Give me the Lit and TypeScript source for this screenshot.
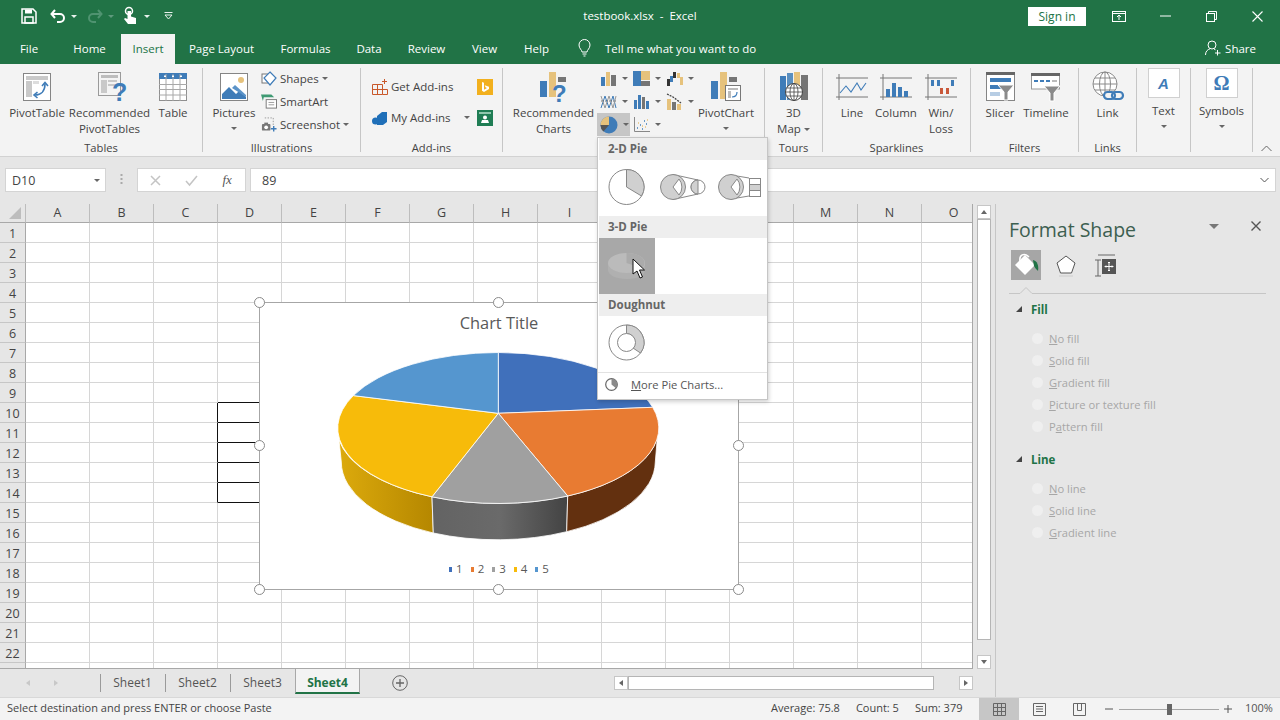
import { LitElement, html, svg, css, nothing } from "lit";
import { customElement } from "lit/decorators.js";

const BLUE = "#3f7cb8";
const TAN = "#e6c27c";
const GRAY = "#757575";

const ico = (w: number, h: number, body: unknown) =>
  html`<svg width=${w} height=${h} viewBox="0 0 ${w} ${h}" fill="none">${body}</svg>`;

/* ribbon icons */
const I = {
  pivot: ico(30, 30, svg`<rect x="1.5" y="1.5" width="27" height="27" fill="#fff" stroke="#858585"/><rect x="4" y="4" width="22" height="4" fill="#c9c9c9"/><rect x="4" y="9" width="6" height="16" fill="#c9c9c9"/><rect x="11" y="9" width="6" height="3" fill="#ddd"/><path d="M13 23c6 0 10-4 10-11" stroke="${BLUE}" stroke-width="1.6"/><path d="M20 14l3-3.5 3 3.5M15.5 20l-3.5 3 3.5 3" stroke="${BLUE}" stroke-width="1.6"/>`),
  recPivot: ico(32, 32, svg`<rect x="4.5" y="1.5" width="22" height="23" fill="#f4f4f4" stroke="#9a9a9a"/><rect x="7" y="4" width="17" height="3" fill="#bdbdbd"/><rect x="7" y="9" width="6" height="13" fill="#c9c9c9"/><rect x="14" y="9" width="9" height="2" fill="#c9c9c9"/><rect x="14" y="13" width="9" height="2" fill="#c9c9c9"/><text x="18" y="30" font-family="Liberation Sans" font-size="25" font-weight="700" fill="${BLUE}">?</text>`),
  table: ico(28, 28, svg`<rect x=".5" y=".5" width="27" height="27" fill="#fff" stroke="#8f8f8f"/><rect width="28" height="6" fill="${BLUE}"/><path d="M7 1v27M14 1v27M21 1v27M0 11.5h28M0 16.5h28M0 22h28" stroke="#a8a8a8"/><path d="M5 2.5h2V4H5zM13 2.5h2V4h-2zM21 2.5h2V4h-2z" fill="#fff"/>`),
  pictures: ico(28, 28, svg`<rect x=".5" y=".5" width="27" height="27" fill="#fff" stroke="#858585"/><circle cx="21" cy="7" r="3" fill="${TAN}"/><path d="M2 26v-5l7-7 7 7 3-3 7 6v2z" fill="${BLUE}"/><path d="M12 15l3-3 11 10v2z" fill="#5b93c8"/>`),
  shapes: ico(16, 16, svg`<rect x="1" y="3" width="9" height="9" stroke="#777" fill="#fff"/><path d="M9 1l6 6-6 7-6-7z" fill="#fff" stroke="${BLUE}" stroke-width="1.2"/>`),
  smartart: ico(17, 17, svg`<path d="M0 1h11l3 3H3l-1 4z" fill="#3f9a73"/><rect x="5.5" y="6.5" width="11" height="9" fill="#fff" stroke="#777"/><path d="M8 9.5h6M8 12h6" stroke="#999"/>`),
  screenshot: ico(17, 17, svg`<path d="M4 1.5h9v8" stroke="#999" stroke-dasharray="1.5 1.5"/><rect x="1" y="8" width="9" height="7" rx="1" fill="#777"/><rect x="3.5" y="6.5" width="4" height="2" fill="#777"/><circle cx="5.5" cy="11.5" r="2" fill="#fff"/><path d="M13.5 10v6M10.5 13h6" stroke="${BLUE}" stroke-width="1.5"/>`),
  getAddins: ico(16, 16, svg`<path d="M.5 5.5h10v10H.5zM.5 10.5h10M5.5 5.5v10M10.5 10.5h5v5h-5" stroke="#c9582a"/><path d="M12.5 0v5M10 2.5h5" stroke="#c9582a"/>`),
  myAddins: ico(16, 16, svg`<path d="M5 6l5-4h5v10l-4 3H5z" fill="#1f6fb8"/><circle cx="3.5" cy="11" r="3.5" fill="#1f6fb8"/>`),
  bing: ico(16, 16, svg`<rect width="16" height="16" fill="#f2b01e"/><path d="M5 3l2 .7v7l3-1.7-1.5-.7-.8-2 4.3 1.5v2.2L7 13l-2-1.2z" fill="#fff"/>`),
  greenBox: ico(16, 16, svg`<rect width="16" height="16" fill="#1f7d54"/><rect x="2" y="2" width="12" height="2" fill="#8fc7ad"/><circle cx="8" cy="7.5" r="2" fill="#fff"/><path d="M4 13l1-3h6l1 3z" fill="#fff"/>`),
  recCharts: ico(30, 32, svg`<rect x="1" y="10" width="7" height="16" fill="${BLUE}"/><rect x="10" y="1" width="7" height="25" fill="${TAN}"/><rect x="19" y="6" width="8" height="5" fill="${GRAY}"/><text x="13" y="31" font-family="Liberation Sans" font-size="24" font-weight="700" fill="${BLUE}">?</text>`),
  bars: ico(17, 15, svg`<rect x="1" y="6" width="4" height="9" fill="${BLUE}"/><rect x="6" y="1" width="4" height="14" fill="${TAN}"/><rect x="11" y="4" width="5" height="11" fill="${GRAY}"/>`),
  tree: ico(17, 15, svg`<rect width="8" height="15" fill="${BLUE}"/><rect x="8" width="9" height="9" fill="${TAN}"/><rect x="8" y="10" width="9" height="5" fill="${GRAY}"/>`),
  water: ico(17, 15, svg`<rect x="1" y="8" width="3" height="7" fill="#333"/><rect x="4" y="5" width="3" height="6" fill="${BLUE}"/><rect x="7" y="1" width="3" height="6" fill="#333"/><rect x="11" y="2" width="3" height="5" fill="${TAN}"/><rect x="14" y="6" width="3" height="8" fill="${TAN}"/>`),
  stat: ico(17, 17, svg`<path d="M1 15L5 3l4 12 4-12 3 12" stroke="${BLUE}"/><path d="M1 3l4 12 4-12 4 12 3-12" stroke="#999"/><path d="M1 8h15" stroke="#777" stroke-dasharray="1 1"/>`),
  col: ico(17, 15, svg`<rect x="1" y="6" width="3" height="9" fill="${BLUE}"/><rect x="5" y="1" width="3" height="14" fill="${BLUE}"/><rect x="9" y="3" width="3" height="12" fill="${GRAY}"/><rect x="13" y="7" width="3" height="8" fill="${BLUE}"/>`),
  pareto: ico(17, 17, svg`<rect x="1" y="6" width="4" height="11" fill="${TAN}"/><rect x="6" y="9" width="4" height="8" fill="${GRAY}"/><rect x="11" y="11" width="4" height="6" fill="${TAN}"/><path d="M1 1l6 3 8 6" stroke="#444" stroke-width="1.3" stroke-dasharray="2 1"/>`),
  pie: ico(18, 18, svg`<circle cx="9" cy="9" r="8.5" fill="${BLUE}"/><path d="M9 9V.5A8.5 8.5 0 0 0 .5 9z" fill="${TAN}"/><path d="M9 9H.5a8.5 8.5 0 0 0 3 6.5z" fill="#555"/>`),
  scatter: ico(17, 17, svg`<path d="M1.5 1v14.5H17" stroke="#888"/><path d="M4 12h1M7 9h1M9 13h1M11 5h1M13 8h1" stroke="${BLUE}" stroke-width="1.5"/><path d="M5 7h1M9 10h1M12 11h1M14 4h1" stroke="${TAN}" stroke-width="1.5"/>`),
  pivotChart: ico(32, 32, svg`<rect x="1" y="10" width="7" height="18" fill="${BLUE}"/><rect x="10" y="1" width="7" height="27" fill="${TAN}"/><rect x="19" y="6" width="8" height="5" fill="${GRAY}"/><rect x="15.5" y="14.5" width="15" height="15" fill="#fff" stroke="#777"/><rect x="18" y="17" width="10" height="2" fill="#bbb"/><rect x="18" y="20" width="3" height="7" fill="#bbb"/><path d="M22 26c3 0 5-2 5-5" stroke="${BLUE}" stroke-width="1.2"/>`),
  map3d: ico(30, 30, svg`<rect x="1" y="4" width="6" height="24" fill="${BLUE}"/><rect x="8" y="1" width="6" height="27" fill="#5a8fc0"/><rect x="15" y="0" width="6" height="14" fill="${TAN}"/><rect x="22" y="3" width="7" height="25" fill="${GRAY}"/><circle cx="15" cy="20" r="8.5" fill="#fff" stroke="#444"/><path d="M6.5 20h17M7.5 16h15M7.5 24h15M15 11.5v17" stroke="#444" stroke-width=".8"/><ellipse cx="15" cy="20" rx="4" ry="8.5" stroke="#444" stroke-width=".8"/>`),
  line: ico(32, 26, svg`<path d="M3 0v26M0 4h32M0 23h32" stroke="#777"/><path d="M4 19l6-7 5 6 6-9 4 7 5-7" stroke="${BLUE}" stroke-width="1.1"/>`),
  column: ico(32, 26, svg`<path d="M3 0v26M0 4h32M0 23h32" stroke="#777"/><rect x="6" y="15" width="4" height="8" fill="${BLUE}"/><rect x="12" y="9" width="4" height="14" fill="${BLUE}"/><rect x="18" y="13" width="4" height="10" fill="${BLUE}"/><rect x="24" y="17" width="4" height="6" fill="${BLUE}"/>`),
  win: ico(32, 26, svg`<path d="M3 0v26M0 4h32M0 23h32" stroke="#777"/><rect x="6" y="6" width="3" height="6" fill="${BLUE}"/><rect x="12" y="6" width="3" height="6" fill="${BLUE}"/><rect x="15" y="14" width="3" height="6" fill="#c9583a"/><rect x="21" y="14" width="3" height="6" fill="#c9583a"/><rect x="26" y="6" width="3" height="6" fill="${BLUE}"/>`),
  slicer: ico(29, 29, svg`<rect x=".5" y=".5" width="28" height="28" fill="#fff" stroke="#858585"/><rect width="29" height="3" fill="#666"/><rect x="4" y="6" width="21" height="4" fill="${BLUE}"/><rect x="4" y="13" width="12" height="4" fill="${BLUE}"/><rect x="4" y="20" width="10" height="4" fill="#b7cde4"/><path d="M12 13h16l-6 7v8h-4v-8z" fill="#8a8a8a" stroke="#fff"/>`),
  timeline: ico(30, 28, svg`<rect x=".5" y="1" width="28" height="15" fill="#fff" stroke="#999"/><rect width="29" height="3" fill="#666"/><path d="M3 8h4M9 8h4M15 8h4" stroke="${BLUE}" stroke-width="2"/><path d="M21 8h5" stroke="#bbb" stroke-width="2"/><path d="M13 13h16l-6 7v8h-4v-8z" fill="#8a8a8a" stroke="#fff"/>`),
  link: ico(32, 32, svg`<circle cx="13" cy="13" r="12" fill="#fff" stroke="#8a8a8a"/><ellipse cx="13" cy="13" rx="5.5" ry="12" stroke="#8a8a8a"/><path d="M13 1v24M1 13h24M3 7h20M3 19h20" stroke="#8a8a8a"/><rect x="12" y="21" width="11" height="7" rx="3.5" stroke="${BLUE}" stroke-width="2.2" fill="#f3f3f3"/><rect x="20" y="21" width="11" height="7" rx="3.5" stroke="${BLUE}" stroke-width="2.2" fill="none"/>`),
};

/* dropdown thumbnails */
const T = {
  pie: ico(56, 56, svg`<circle cx="27.5" cy="27" r="17.5" fill="#fff" stroke="#888"/><path d="M27.5 27V9.5a17.5 17.5 0 0 1 15 26.5z" fill="#d0d0d0" stroke="#888"/>`),
  pieOfPie: ico(56, 56, svg`<path d="M18 14.5L43 20M18 39.5L43 34" stroke="#888"/><circle cx="18" cy="27" r="12.5" fill="#d0d0d0" stroke="#888"/><path d="M18 27l6-8a12.5 12.5 0 0 1 0 16z" fill="#fff" stroke="#888"/><circle cx="43" cy="27" r="7" fill="#fff" stroke="#888"/><path d="M43 20a7 7 0 0 0 0 14z" fill="#d0d0d0" stroke="#888"/>`),
  barOfPie: ico(56, 56, svg`<path d="M20 15l18 3M20 39l18-3" stroke="#888"/><circle cx="20" cy="27" r="12.5" fill="#d0d0d0" stroke="#888"/><path d="M20 27l6-8a12.5 12.5 0 0 1 0 16z" fill="#fff" stroke="#888"/><rect x="38.5" y="18.5" width="11" height="18" fill="#fff" stroke="#888"/><rect x="38.5" y="24.5" width="11" height="6" fill="#d0d0d0" stroke="#888"/>`),
  pie3d: ico(56, 56, svg`<path d="M9 25v7c0 5 8 9 19 9s18-4 18-9v-7z" fill="#b0b0b0"/><ellipse cx="27.5" cy="25" rx="18.5" ry="10" fill="#bbb"/><path d="M27.5 25V15c10 0 18 4 18 10 0 2-1 3.5-3 5z" fill="#ababab"/>`),
  doughnut: ico(56, 56, svg`<circle cx="27.5" cy="26.5" r="17.5" fill="#fff" stroke="#888"/><path d="M27.5 9a17.5 17.5 0 0 1 14 28l-7.5-5a9 9 0 0 0-6.5-14.5z" fill="#d0d0d0" stroke="#888"/><circle cx="27.5" cy="26.5" r="9" fill="#fff" stroke="#888"/>`),
};

const COLS = "ABCDEFGHIJKLMNO".split("");
const COVERED = "JKL"; // under the open menu
const ROWS = Array.from({ length: 23 }, (_, i) => i + 1);
const HANDLES = ["tl", "tc", "tr", "ml", "mr", "bl", "bc", "br"];
const FILL_OPTS: [string, string, string][] = [
  ["", "N", "o fill"], ["", "S", "olid fill"], ["", "G", "radient fill"],
  ["", "P", "icture or texture fill"], ["P", "a", "ttern fill"],
];
const LINE_OPTS: [string, string, string][] = [
  ["", "N", "o line"], ["", "S", "olid line"], ["", "G", "radient line"],
];

@customElement("app-root")
export class AppRoot extends LitElement {
  static styles = css`
    :host { display: block; position: relative; width: 1280px; height: 720px; overflow: hidden;
      font-family: "Open Sans", "Noto Sans", sans-serif; font-size: 11.5px; color: #444; background: #e6e6e6; }
    svg { display: block; flex: none; overflow: visible; }
    .caret { display: inline-block; width: 0; height: 0; border: 3px solid transparent; border-top: 3px solid #666; border-bottom: 0; flex: none; }
    .caret.w { border-top-color: #e8f1ec; }
    .caret.dim { border-top-color: #5f9a7d; }

    .titlebar { height: 32px; background: #217346; color: #fff; display: grid; grid-template-columns: 1fr auto 1fr; align-items: center; }
    .qat { display: flex; align-items: center; padding-left: 21px; }
    .doc { font-size: 11.5px; margin-top: -1px; }
    .winbtns { display: flex; align-items: center; justify-content: flex-end; }
    .signin { width: 58px; height: 19px; background: #fff; color: #217346; text-align: center; line-height: 19px; font-size: 12px; margin-right: 10px; }
    .wb { width: 46px; display: flex; justify-content: center; }

    .tabs { height: 32px; background: #217346; color: #fff; display: flex; align-items: flex-end; }
    .tab { height: 32px; line-height: 33px; text-align: center; font-size: 11.5px; }
    .tab.on { height: 30px; line-height: 29px; background: #f3f3f3; color: #217346; }
    .tell { display: flex; align-items: center; height: 32px; margin-left: 16px; gap: 14px; font-size: 11.5px; }
    .share { margin-left: auto; margin-right: 24px; display: flex; align-items: center; gap: 4px; height: 32px; font-size: 11.5px; }

    .ribbon { height: 92px; background: #f3f3f3; border-bottom: 1px solid #d2d2d2; display: flex; position: relative; color: #444; }
    .group { margin-top: 4px; height: 84px; border-right: 1px solid #c6c6c6; box-sizing: border-box; display: flex; flex-direction: column; flex: none; }
    .content { height: 72px; display: flex; flex: none; box-sizing: border-box; }
    .glabel { height: 12px; line-height: 16px; text-align: center; font-size: 11.2px; color: #444; }
    .big { display: flex; flex-direction: column; align-items: center; flex: none; }
    .bigicon { height: 37px; display: flex; align-items: center; justify-content: center; }
    .lbl { line-height: 16px; text-align: center; white-space: nowrap; }
    .lbl .caret { margin-left: 3px; vertical-align: 2px; }
    .arrowline { height: 15px; display: flex; align-items: center; justify-content: center; }
    .pl10 { padding-left: 10px; } .pl5 { padding-left: 5px; } .pl6 { padding-left: 6px; }
    .list { margin: -1px 0 0 1px; }
    .listrow { height: 23px; display: flex; align-items: center; gap: 3px; white-space: nowrap; }
    .listrow svg { width: 16px; }
    .addins { padding: 3px 0 0 11px; }
    .addcol { width: 121px; }
    .addrow { height: 31px; display: flex; align-items: center; }
    .addrow .t { flex: 1; padding-left: 3px; white-space: nowrap; }
    .addrow .caret { margin-right: 7px; }
    .chartgrid { margin-top: -1px; display: grid; grid-template-columns: repeat(3, 33px); grid-auto-rows: 23px; margin-left: 3px; height: 69px; }
    .cg { display: flex; align-items: center; padding-left: 3px; gap: 5px; }
    .cg.on { background: #c6c6c6; }
    .boxbtn { display: flex; flex-direction: column; align-items: center; width: 100%; }
    .box { width: 32px; height: 30px; background: #fff; border: 1px solid #d0d0d0; box-sizing: border-box; display: flex; align-items: center; justify-content: center; margin-bottom: 5px; color: #3f7cb8; font-size: 17px; font-weight: 700; }
    .box.a { font-style: italic; font-family: "Liberation Sans", sans-serif; font-size: 15px; }
    .box.o { font-family: "Liberation Serif", serif; font-size: 20px; }
    .collapse { position: absolute; right: 8px; top: 81px; }

    .fbar { height: 47px; background: #e6e6e6; display: flex; align-items: flex-start; padding-top: 11px; box-sizing: border-box; }
    .namebox { margin-left: 5px; width: 101px; height: 24px; background: #fff; border: 1px solid #d4d4d4; box-sizing: border-box; display: flex; align-items: center; justify-content: space-between; padding: 0 5px 0 6px; font-size: 12.5px; }
    .dots { width: 31px; height: 24px; display: flex; align-items: center; justify-content: center; }
    .fbtns { width: 109px; height: 24px; background: #fff; border: 1px solid #d4d4d4; box-sizing: border-box; display: flex; align-items: center; }
    .fbtns > * { width: 36px; display: flex; justify-content: center; }
    .fx { font-family: "Liberation Serif", serif; font-style: italic; font-size: 13px; color: #555; }
    .finput { margin-left: 4px; width: 1026px; height: 24px; background: #fff; border: 1px solid #d4d4d4; box-sizing: border-box; display: flex; align-items: center; justify-content: space-between; padding: 0 6px 0 11px; font-size: 12.5px; }

    .main { display: flex; height: 493px; }
    .left { width: 995px; border-right: 1px solid #c6c6c6; display: flex; flex-direction: column; }
    .sheetrow { display: flex; height: 465px; flex: none; }
    .gridwrap { position: relative; width: 973px; height: 465px; overflow: hidden; background: #fff; border-right: 1px solid #a8a8a8; border-bottom: 1px solid #a8a8a8; box-sizing: border-box; flex: none; }
    .grid { display: grid; grid-template-columns: 26px repeat(15, 64px); grid-template-rows: 19px repeat(23, 20px); }
    .hd { background: #e6e6e6; border-right: 1px solid #bdbdbd; border-bottom: 1px solid #a8a8a8; box-sizing: border-box; text-align: center; line-height: 18px; font-size: 12.5px; color: #444; }
    .rh { background: #e6e6e6; border-right: 1px solid #a8a8a8; border-bottom: 1px solid #c6c6c6; box-sizing: border-box; text-align: center; line-height: 21px; font-size: 12.5px; color: #444; }
    .cell { border-right: 1px solid #d6d6d6; border-bottom: 1px solid #d6d6d6; box-sizing: border-box; }
    .cell.bb { border-bottom-color: #111; }
    .cell.rb { border-right-color: #111; }
    .corner { display: flex; align-items: flex-end; justify-content: flex-end; padding: 0 4px 3px 0; }

    .chart { position: absolute; left: 259px; top: 98px; width: 480px; height: 288px; box-sizing: border-box; background: #fff; border: 1px solid #a6a6a6; display: flex; flex-direction: column; align-items: center; padding-top: 8px; }
    .ctitle { line-height: 24px; font-size: 16.4px; color: #595959; }
    .chart svg { margin-top: 10px; }
    .legend { margin-top: 15px; display: flex; gap: 8px; line-height: 18px; font-size: 11.5px; color: #595959; }
    .leg { display: flex; align-items: center; gap: 4px; }
    .leg i { width: 3px; height: 5px; display: block; }
    .handle { position: absolute; width: 11px; height: 11px; box-sizing: border-box; border-radius: 50%; background: #fff; border: 1.5px solid #8a8a8a; }
    .h-tl, .h-ml, .h-bl { left: -6px; } .h-tr, .h-mr, .h-br { right: -6px; } .h-tc, .h-bc { left: 233px; }
    .h-tl, .h-tc, .h-tr { top: -6px; } .h-bl, .h-bc, .h-br { bottom: -6px; } .h-ml, .h-mr { top: 137px; }

    .vscroll { width: 22px; background: #e6e6e6; display: flex; flex-direction: column; padding: 1px 3px 0 4px; box-sizing: border-box; height: 465px; }
    .sbtn { width: 14px; height: 14px; background: #fff; border: 1px solid #c6c6c6; box-sizing: border-box; display: flex; align-items: center; justify-content: center; flex: none; }
    .vthumb { height: 421px; width: 14px; background: #fff; border: 1px solid #b5b5b5; box-sizing: border-box; flex: none; }
    .vfill { flex: 1; }
    .up { width: 0; height: 0; border: 3.5px solid transparent; border-bottom: 4px solid #666; border-top: 0; }
    .down { width: 0; height: 0; border: 3.5px solid transparent; border-top: 4px solid #666; border-bottom: 0; }
    .lft { width: 0; height: 0; border: 3.5px solid transparent; border-right: 4px solid #666; border-left: 0; }
    .rgt { width: 0; height: 0; border: 3.5px solid transparent; border-left: 4px solid #666; border-right: 0; }

    .sheettabs { height: 28px; display: flex; align-items: stretch; background: #e6e6e6; }
    .navs { width: 100px; display: flex; align-items: center; padding-left: 26px; gap: 24px; box-sizing: border-box; }
    .navs .lft { border-right-color: #c8c8c8; } .navs .rgt { border-left-color: #c8c8c8; }
    .st { width: 65px; text-align: center; line-height: 27px; font-size: 12px; position: relative; color: #555; }
    .st::before { content: ""; position: absolute; left: 0; top: 5px; height: 18px; border-left: 1px solid #9a9a9a; }
    .st.on { background: #f3f3f3; color: #217346; font-weight: 700; border: 1px solid #a8a8a8; border-top: 0; border-bottom: 2px solid #217346; box-sizing: border-box; height: 25px; }
    .st.on::before { display: none; }
    .addsheet { margin-left: 32px; display: flex; align-items: center; height: 28px; }
    .hscroll { margin-left: auto; margin-right: 22px; display: flex; align-items: center; height: 28px; }
    .hthumb { width: 306px; height: 14px; background: #fff; border: 1px solid #b5b5b5; box-sizing: border-box; }
    .hfill { width: 25px; }

    .pane { flex: 1; background: #e6e6e6; padding: 14px 14px 0 13px; box-sizing: border-box; }
    .panehead { display: flex; align-items: center; height: 24px; margin-top: -1px; color: #3d5f50; font-size: 19.5px; }
    .panehead .ttl { flex: 1; }
    .panehead .caret { border-width: 5px 5px 0; margin: -6px 32px 0 0; border-top-color: #777; }
    .panehead svg { margin: -6px 6px 0 0; }
    .panetabs { margin-top: 9px; display: flex; height: 30px; padding-left: 2px; }
    .ptab { width: 30px; height: 30px; display: flex; align-items: center; justify-content: center; margin-right: 10px; }
    .ptab.on { background: #a6a6a6; }
    .panesep { height: 14px; margin-bottom: 7px; }
    .sec { display: flex; align-items: center; height: 16px; color: #217346; font-weight: 700; font-size: 11.5px; margin-top: 1px; }
    .tri { width: 0; height: 0; border-left: 6px solid transparent; border-bottom: 6px solid #444; margin: 0 9px 0 7px; }
    .opts { margin-top: 10px; padding-left: 23px; }
    .opt { height: 22px; display: flex; align-items: center; gap: 6px; color: #a6a6a6; font-size: 11.2px; }
    .opt i { width: 11px; height: 11px; border-radius: 50%; background: #efefef; display: block; flex: none; }
    .sp { height: 13px; }

    .status { height: 23px; background: #f3f3f3; border-top: 1px solid #d8d8d8; box-sizing: border-box; display: flex; align-items: center; padding-left: 7px; font-size: 11px; color: #444; }
    .status .msg { width: 764px; white-space: nowrap; margin-top: -3px; }
    .stats { width: 208px; display: flex; gap: 16px; white-space: nowrap; margin-top: -3px; }
    .vb { width: 40px; height: 22px; display: flex; align-items: center; justify-content: center; }
    .vb.on { background: #c6c6c6; }
    .zoomctl { display: flex; align-items: center; margin-left: 6px; color: #555; }
    .track { width: 100px; height: 1px; background: #a6a6a6; position: relative; margin: 0 5px 0 6px; }
    .track i { position: absolute; left: 48px; top: -5px; width: 5px; height: 11px; background: #666; display: block; }
    .pct { margin: -3px 0 0 13px; }

    .menu { position: absolute; left: 597px; top: 137px; width: 171px; height: 263px; background: #fff; border: 1px solid #c6c6c6; box-sizing: border-box; box-shadow: 1px 2px 4px rgba(0,0,0,.18); display: flex; flex-direction: column; }
    .mh { height: 22px; line-height: 22px; background: #eee; font-weight: 700; font-size: 11.5px; color: #666; padding-left: 9px; margin-left: 1px; flex: none; }
    .mrow { height: 56px; display: flex; flex: none; padding-left: 1px; }
    .tile { width: 56px; height: 56px; position: relative; }
    .tile.on { background: #a8a8a8; }
    .cursor { position: absolute; left: 33px; top: 20px; }
    .more { border-top: 1px solid #e2e2e2; flex: 1; display: flex; align-items: center; padding: 0 0 3px 7px; gap: 13px; color: #555; font-size: 11.2px; }
    u { text-underline-offset: 1px; }
  `;

  private big(label: unknown, icon: unknown, width: number, extra: unknown = nothing) {
    return html`<div class="big" style="width:${width}px"><div class="bigicon">${icon}</div><div class="lbl">${label}</div>${extra}</div>`;
  }

  private titlebar() {
    return html`<div class="titlebar">
      <div class="qat">
        <svg width="16" height="16" viewBox="0 0 16 16"><path d="M1 1h11l3 3v11H1z" fill="none" stroke="#fff" stroke-width="1.5"/><rect x="4" y="1.5" width="7" height="4" fill="#fff"/><rect x="4" y="9" width="8" height="6" fill="none" stroke="#fff" stroke-width="1.5"/></svg>
        <svg style="margin-left:13px" width="16" height="14" viewBox="0 0 16 14"><path d="M2 5h8a4 4 0 0 1 0 8H7M5 1L1.5 5 5 9" fill="none" stroke="#fff" stroke-width="2"/></svg>
        <span class="caret w" style="margin-left:5px"></span>
        <svg style="margin-left:10px" width="16" height="14" viewBox="0 0 16 14"><path d="M14 5H6a4 4 0 0 0 0 8h3M11 1l3.5 4L11 9" fill="none" stroke="#4f9370" stroke-width="2"/></svg>
        <span class="caret dim" style="margin-left:5px"></span>
        <svg style="margin-left:9px" width="14" height="18" viewBox="0 0 14 18"><circle cx="6" cy="4" r="3.5" fill="none" stroke="#fff" stroke-width="1.5"/><path d="M4.5 4v8L2 11l-1 1 4 5h8v-6l-5-1.5V4z" fill="#fff"/></svg>
        <span class="caret w" style="margin-left:7px"></span>
        <svg style="margin-left:14px" width="9" height="8" viewBox="0 0 9 8"><path d="M.5.5h8M1 3l3.5 4L8 3z" stroke="#e8f1ec" fill="none"/></svg>
      </div>
      <div class="doc">testbook.xlsx &nbsp;-&nbsp; Excel</div>
      <div class="winbtns">
        <div class="signin">Sign in</div>
        <div class="wb"><svg width="14" height="11" viewBox="0 0 14 11"><rect x=".5" y=".5" width="13" height="10" fill="none" stroke="#fff"/><path d="M1 2.5h12M7 9V4.5M5 6l2-2 2 2" fill="none" stroke="#fff"/></svg></div>
        <div class="wb"><svg width="11" height="2" viewBox="0 0 11 2"><path d="M0 1h11" stroke="#fff"/></svg></div>
        <div class="wb"><svg width="11" height="11" viewBox="0 0 11 11"><rect x=".5" y="2.5" width="8" height="8" fill="none" stroke="#fff"/><path d="M2.5 2.5v-2h8v8h-2" fill="none" stroke="#fff"/></svg></div>
        <div class="wb"><svg width="11" height="11" viewBox="0 0 11 11"><path d="M.5.5l10 10M10.5.5l-10 10" stroke="#fff" stroke-width="1.1"/></svg></div>
      </div>
    </div>`;
  }

  private tabs() {
    const items: [string, number][] = [["File", 58], ["Home", 63], ["Insert", 54], ["Page Layout", 93], ["Formulas", 75], ["Data", 52], ["Review", 63], ["View", 53], ["Help", 51]];
    return html`<div class="tabs">
      ${items.map(([t, w]) => html`<div class="tab ${t === "Insert" ? "on" : ""}" style="width:${w}px">${t}</div>`)}
      <div class="tell">
        <svg width="13" height="17" viewBox="0 0 13 17"><path d="M4 12c0-2-3-3.5-3-7a5.5 5.5 0 0 1 11 0c0 3.5-3 5-3 7zM4.5 14h4M5.5 16h2" fill="none" stroke="#fff"/></svg>
        <span>Tell me what you want to do</span>
      </div>
      <div class="share">
        <svg width="16" height="16" viewBox="0 0 16 16"><circle cx="7" cy="5" r="4" fill="none" stroke="#fff"/><path d="M.5 15c0-3.5 2-5.5 4.5-6.2M9 9l1.5.8M12.5 10v5.5M10 13h5.5" fill="none" stroke="#fff"/></svg>
        <span>Share</span>
      </div>
    </div>`;
  }

  private ribbon() {
    const arrow = html`<div class="arrowline"><span class="caret"></span></div>`;
    const cg = (icon: unknown, on = false) => html`<div class="cg ${on ? "on" : ""}">${icon}<span class="caret"></span></div>`;
    return html`<div class="ribbon">
      <div class="group" style="width:203px">
        <div class="content pl10">
          ${this.big("PivotTable", I.pivot, 54)}
          ${this.big(html`Recommended<br />PivotTables`, I.recPivot, 91)}
          ${this.big("Table", I.table, 36)}
        </div>
        <div class="glabel">Tables</div>
      </div>
      <div class="group" style="width:158px">
        <div class="content pl5">
          ${this.big("Pictures", I.pictures, 52, arrow)}
          <div class="list">
            <div class="listrow">${I.shapes}<span>Shapes</span><span class="caret"></span></div>
            <div class="listrow">${I.smartart}<span>SmartArt</span></div>
            <div class="listrow">${I.screenshot}<span>Screenshot</span><span class="caret"></span></div>
          </div>
        </div>
        <div class="glabel">Illustrations</div>
      </div>
      <div class="group" style="width:142px">
        <div class="content addins">
          <div class="addcol">
            <div class="addrow">${I.getAddins}<span class="t">Get Add-ins</span>${I.bing}</div>
            <div class="addrow">${I.myAddins}<span class="t">My Add-ins</span><span class="caret"></span>${I.greenBox}</div>
          </div>
        </div>
        <div class="glabel">Add-ins</div>
      </div>
      <div class="group" style="width:262px">
        <div class="content pl10">
          ${this.big(html`Recommended<br />Charts`, I.recCharts, 81)}
          <div class="chartgrid">
            ${cg(I.bars)}${cg(I.tree)}${cg(I.water)}
            ${cg(I.stat)}${cg(I.col)}${cg(I.pareto)}
            ${cg(I.pie, true)}${cg(I.scatter)}
          </div>
          ${this.big("PivotChart", I.pivotChart, 60, arrow)}
        </div>
      </div>
      <div class="group" style="width:58px">
        <div class="content">${this.big(html`3D<br />Map<span class="caret"></span>`, I.map3d, 57)}</div>
        <div class="glabel">Tours</div>
      </div>
      <div class="group" style="width:148px">
        <div class="content pl6">
          ${this.big("Line", I.line, 46)}
          ${this.big("Column", I.column, 42)}
          ${this.big(html`Win/<br />Loss`, I.win, 48)}
        </div>
        <div class="glabel">Sparklines</div>
      </div>
      <div class="group" style="width:108px">
        <div class="content pl6">
          ${this.big("Slicer", I.slicer, 46)}
          ${this.big("Timeline", I.timeline, 46)}
        </div>
        <div class="glabel">Filters</div>
      </div>
      <div class="group" style="width:58px">
        <div class="content">${this.big("Link", I.link, 57)}</div>
        <div class="glabel">Links</div>
      </div>
      <div class="group" style="width:54px">
        <div class="content"><div class="boxbtn"><div class="box a">A</div><div class="lbl">Text</div>${arrow}</div></div>
      </div>
      <div class="group" style="width:62px">
        <div class="content"><div class="boxbtn"><div class="box o">Ω</div><div class="lbl">Symbols</div>${arrow}</div></div>
      </div>
      <svg class="collapse" width="11" height="7" viewBox="0 0 11 7"><path d="M.5 6L5.5 1l5 5" fill="none" stroke="#666"/></svg>
    </div>`;
  }

  private formulaBar() {
    return html`<div class="fbar">
      <div class="namebox"><span>D10</span><span class="caret"></span></div>
      <div class="dots"><svg width="3" height="12" viewBox="0 0 3 12"><path d="M1.5 0v12" stroke="#aaa" stroke-width="2" stroke-dasharray="2 2"/></svg></div>
      <div class="fbtns">
        <div><svg width="11" height="11" viewBox="0 0 11 11"><path d="M1 1l9 9M10 1l-9 9" stroke="#c4c4c4" stroke-width="1.5"/></svg></div>
        <div><svg width="13" height="11" viewBox="0 0 13 11"><path d="M1 6l3.5 4L12 1" fill="none" stroke="#c4c4c4" stroke-width="1.5"/></svg></div>
        <div class="fx">fx</div>
      </div>
      <div class="finput"><span>89</span><svg width="9" height="6" viewBox="0 0 9 6"><path d="M.5 1l4 4 4-4" fill="none" stroke="#555"/></svg></div>
    </div>`;
  }

  private grid() {
    const cellClass = (r: number, c: number) => {
      const cl = ["cell"];
      if (c === 3 && r >= 9 && r <= 14) cl.push("bb");
      if (c === 2 && r >= 10 && r <= 14) cl.push("rb");
      return cl.join(" ");
    };
    return html`<div class="grid">
      <div class="hd corner"><svg width="12" height="12" viewBox="0 0 12 12"><path d="M12 0v12H0z" fill="#bdbdbd"/></svg></div>
      ${COLS.map((c) => html`<div class="hd">${COVERED.includes(c) ? "" : c}</div>`)}
      ${ROWS.map((r) => html`<div class="rh">${r < 23 ? r : ""}</div>${COLS.map((_, c) => html`<div class=${cellClass(r, c)}></div>`)}`)}
    </div>`;
  }

  private chart() {
    const rim = "A160.5 75.5 0 0 1";
    const rimBack = "A160.5 75.5 0 0 0";
    const low = "A157 78 0 0 1";
    const legend: [string, string][] = [["#4070bb", "1"], ["#e87b32", "2"], ["#a0a0a0", "3"], ["#f7bb0a", "4"], ["#5596cf", "5"]];
    return html`<div class="chart">
      <div class="ctitle">Chart Title</div>
      <svg width="340" height="200" viewBox="329 345 340 200">
        <defs>
          <linearGradient id="gy"><stop offset="0" stop-color="#dcaa0c"/><stop offset="1" stop-color="#b58700"/></linearGradient>
          <linearGradient id="gg"><stop offset="0" stop-color="#636363"/><stop offset=".5" stop-color="#6a6a6a"/><stop offset="1" stop-color="#434343"/></linearGradient>
        </defs>
        <g stroke="#fff" stroke-width=".8">
          <path d="M339 440 ${rimBack} 432 496.8 L433.3 533 ${low} 341.3 462Z" fill="url(#gy)"/>
          <path d="M432 496.8 ${rimBack} 567.7 496 L566.7 531.7 ${low} 433.3 533Z" fill="url(#gg)"/>
          <path d="M567.7 496 ${rimBack} 657.3 438 L655.3 462 ${low} 566.7 531.7Z" fill="#63300f"/>
          <path d="M498.3 413.3L498.3 352.5 ${rim} 652.7 407.3Z" fill="#4070bb"/>
          <path d="M498.3 413.3L652.7 407.3 ${rim} 567.7 496Z" fill="#e87b32"/>
          <path d="M498.3 413.3L567.7 496 ${rim} 432 496.8Z" fill="#a0a0a0"/>
          <path d="M498.3 413.3L432 496.8 ${rim} 353.3 395.6Z" fill="#f7bb0a"/>
          <path d="M498.3 413.3L353.3 395.6 ${rim} 498.3 352.5Z" fill="#5596cf"/>
        </g>
      </svg>
      <div class="legend">${legend.map(([c, t]) => html`<div class="leg"><i style="background:${c}"></i><span>${t}</span></div>`)}</div>
      ${HANDLES.map((h) => html`<div class="handle h-${h}"></div>`)}
    </div>`;
  }

  private sheetTabs() {
    return html`<div class="sheettabs">
      <div class="navs"><span class="lft"></span><span class="rgt"></span></div>
      <div class="st">Sheet1</div><div class="st">Sheet2</div><div class="st">Sheet3</div><div class="st on">Sheet4</div>
      <div class="addsheet"><svg width="16" height="16" viewBox="0 0 16 16"><circle cx="8" cy="8" r="7.3" fill="none" stroke="#666"/><path d="M8 4v8M4 8h8" stroke="#666" stroke-width="1.3"/></svg></div>
      <div class="hscroll">
        <div class="sbtn"><span class="lft"></span></div>
        <div class="hthumb"></div>
        <div class="hfill"></div>
        <div class="sbtn"><span class="rgt"></span></div>
      </div>
    </div>`;
  }

  private opts(list: [string, string, string][]) {
    return html`<div class="opts">${list.map(([a, b, c]) => html`<div class="opt"><i></i><span>${a}<u>${b}</u>${c}</span></div>`)}</div>`;
  }

  private pane() {
    return html`<div class="pane">
      <div class="panehead"><span class="ttl">Format Shape</span><span class="caret"></span>
        <svg width="10" height="10" viewBox="0 0 10 10"><path d="M.5.5l9 9M9.5.5l-9 9" stroke="#555" stroke-width="1.4"/></svg>
      </div>
      <div class="panetabs">
        <div class="ptab on"><svg width="30" height="30" viewBox="0 0 30 30"><path d="M14 5l10 10-10 10L4 15z" fill="#fff"/><path d="M9 11c-1-6 4-9 9-4" fill="none" stroke="#fff" stroke-width="1.5"/><path d="M22 10c4 1 6 5 5 11-1-1-3-3-4-5z" fill="#217346"/></svg></div>
        <div class="ptab"><svg width="24" height="24" viewBox="0 0 24 24"><path d="M12 3l9 7-3.5 10h-11L3 10z" fill="#fff" stroke="#555"/><path d="M5 23h14" stroke="#ccc"/></svg></div>
        <div class="ptab"><svg width="24" height="24" viewBox="0 0 24 24"><path d="M4 2h17M1 7h6M4 7v16M1 23h6" stroke="#666"/><rect x="8" y="6" width="14" height="15" fill="#555"/><path d="M15 9v9M11 13.5h8M14 10l1-1 1 1M14 17l1 1 1-1M12 12.500l-1 1 1 1M18 12.500l1 1-1 1" stroke="#fff" fill="none"/></svg></div>
      </div>
      <svg class="panesep" width="258" height="14" viewBox="0 0 258 14"><path d="M0 13.5h11l6-6 6 6h234" fill="none" stroke="#c6c6c6"/></svg>
      <div class="sec"><span class="tri"></span>Fill</div>
      ${this.opts(FILL_OPTS)}
      <div class="sp"></div>
      <div class="sec"><span class="tri"></span>Line</div>
      ${this.opts(LINE_OPTS)}
    </div>`;
  }

  private status() {
    return html`<div class="status">
      <div class="msg">Select destination and press ENTER or choose Paste</div>
      <div class="stats"><span>Average: 75.8</span><span>Count: 5</span><span>Sum: 379</span></div>
      <div class="vb on"><svg width="13" height="13" viewBox="0 0 13 13"><path d="M.5.5h12v12H.5zM4.5.5v12M8.5.5v12M.5 4.5h12M.5 8.5h12" fill="none" stroke="#666"/></svg></div>
      <div class="vb"><svg width="13" height="13" viewBox="0 0 13 13"><path d="M.5.5h12v12H.5z" fill="none" stroke="#666"/><path d="M3 3.5h7M3 6h7M3 8.5h7" stroke="#666"/></svg></div>
      <div class="vb"><svg width="13" height="13" viewBox="0 0 13 13"><path d="M.5.5h12v12H.5zM4.5.5v7h4v-7" fill="none" stroke="#666"/></svg></div>
      <div class="zoomctl">
        <svg width="8" height="8" viewBox="0 0 8 8"><path d="M0 4h8" stroke="#555"/></svg>
        <div class="track"><i></i></div>
        <svg width="8" height="8" viewBox="0 0 8 8"><path d="M0 4h8M4 0v8" stroke="#555"/></svg>
        <span class="pct">100%</span>
      </div>
    </div>`;
  }

  private menu() {
    return html`<div class="menu">
      <div class="mh">2-D Pie</div>
      <div class="mrow"><div class="tile">${T.pie}</div><div class="tile">${T.pieOfPie}</div><div class="tile">${T.barOfPie}</div></div>
      <div class="mh">3-D Pie</div>
      <div class="mrow"><div class="tile on">${T.pie3d}
        <svg class="cursor" width="13" height="21" viewBox="0 0 13 21"><path d="M1 1v15l4-3 3 7 2.5-1-3-7h5z" fill="#fff" stroke="#111"/></svg>
      </div></div>
      <div class="mh">Doughnut</div>
      <div class="mrow"><div class="tile">${T.doughnut}</div></div>
      <div class="more">
        <svg width="13" height="13" viewBox="0 0 13 13"><circle cx="6.5" cy="6.5" r="5.8" fill="#fff" stroke="#666" stroke-width="1.2"/><path d="M6.5 6.5V.7a5.8 5.8 0 0 1 4.5 9.5z" fill="#8a8a8a"/></svg>
        <span><u>M</u>ore Pie Charts...</span>
      </div>
    </div>`;
  }

  render() {
    return html`
      ${this.titlebar()}
      ${this.tabs()}
      ${this.ribbon()}
      ${this.formulaBar()}
      <div class="main">
        <div class="left">
          <div class="sheetrow">
            <div class="gridwrap">${this.grid()}${this.chart()}</div>
            <div class="vscroll">
              <div class="sbtn"><span class="up"></span></div>
              <div class="vthumb"></div>
              <div class="vfill"></div>
              <div class="sbtn"><span class="down"></span></div>
            </div>
          </div>
          ${this.sheetTabs()}
        </div>
        ${this.pane()}
      </div>
      ${this.status()}
      ${this.menu()}
    `;
  }
}
